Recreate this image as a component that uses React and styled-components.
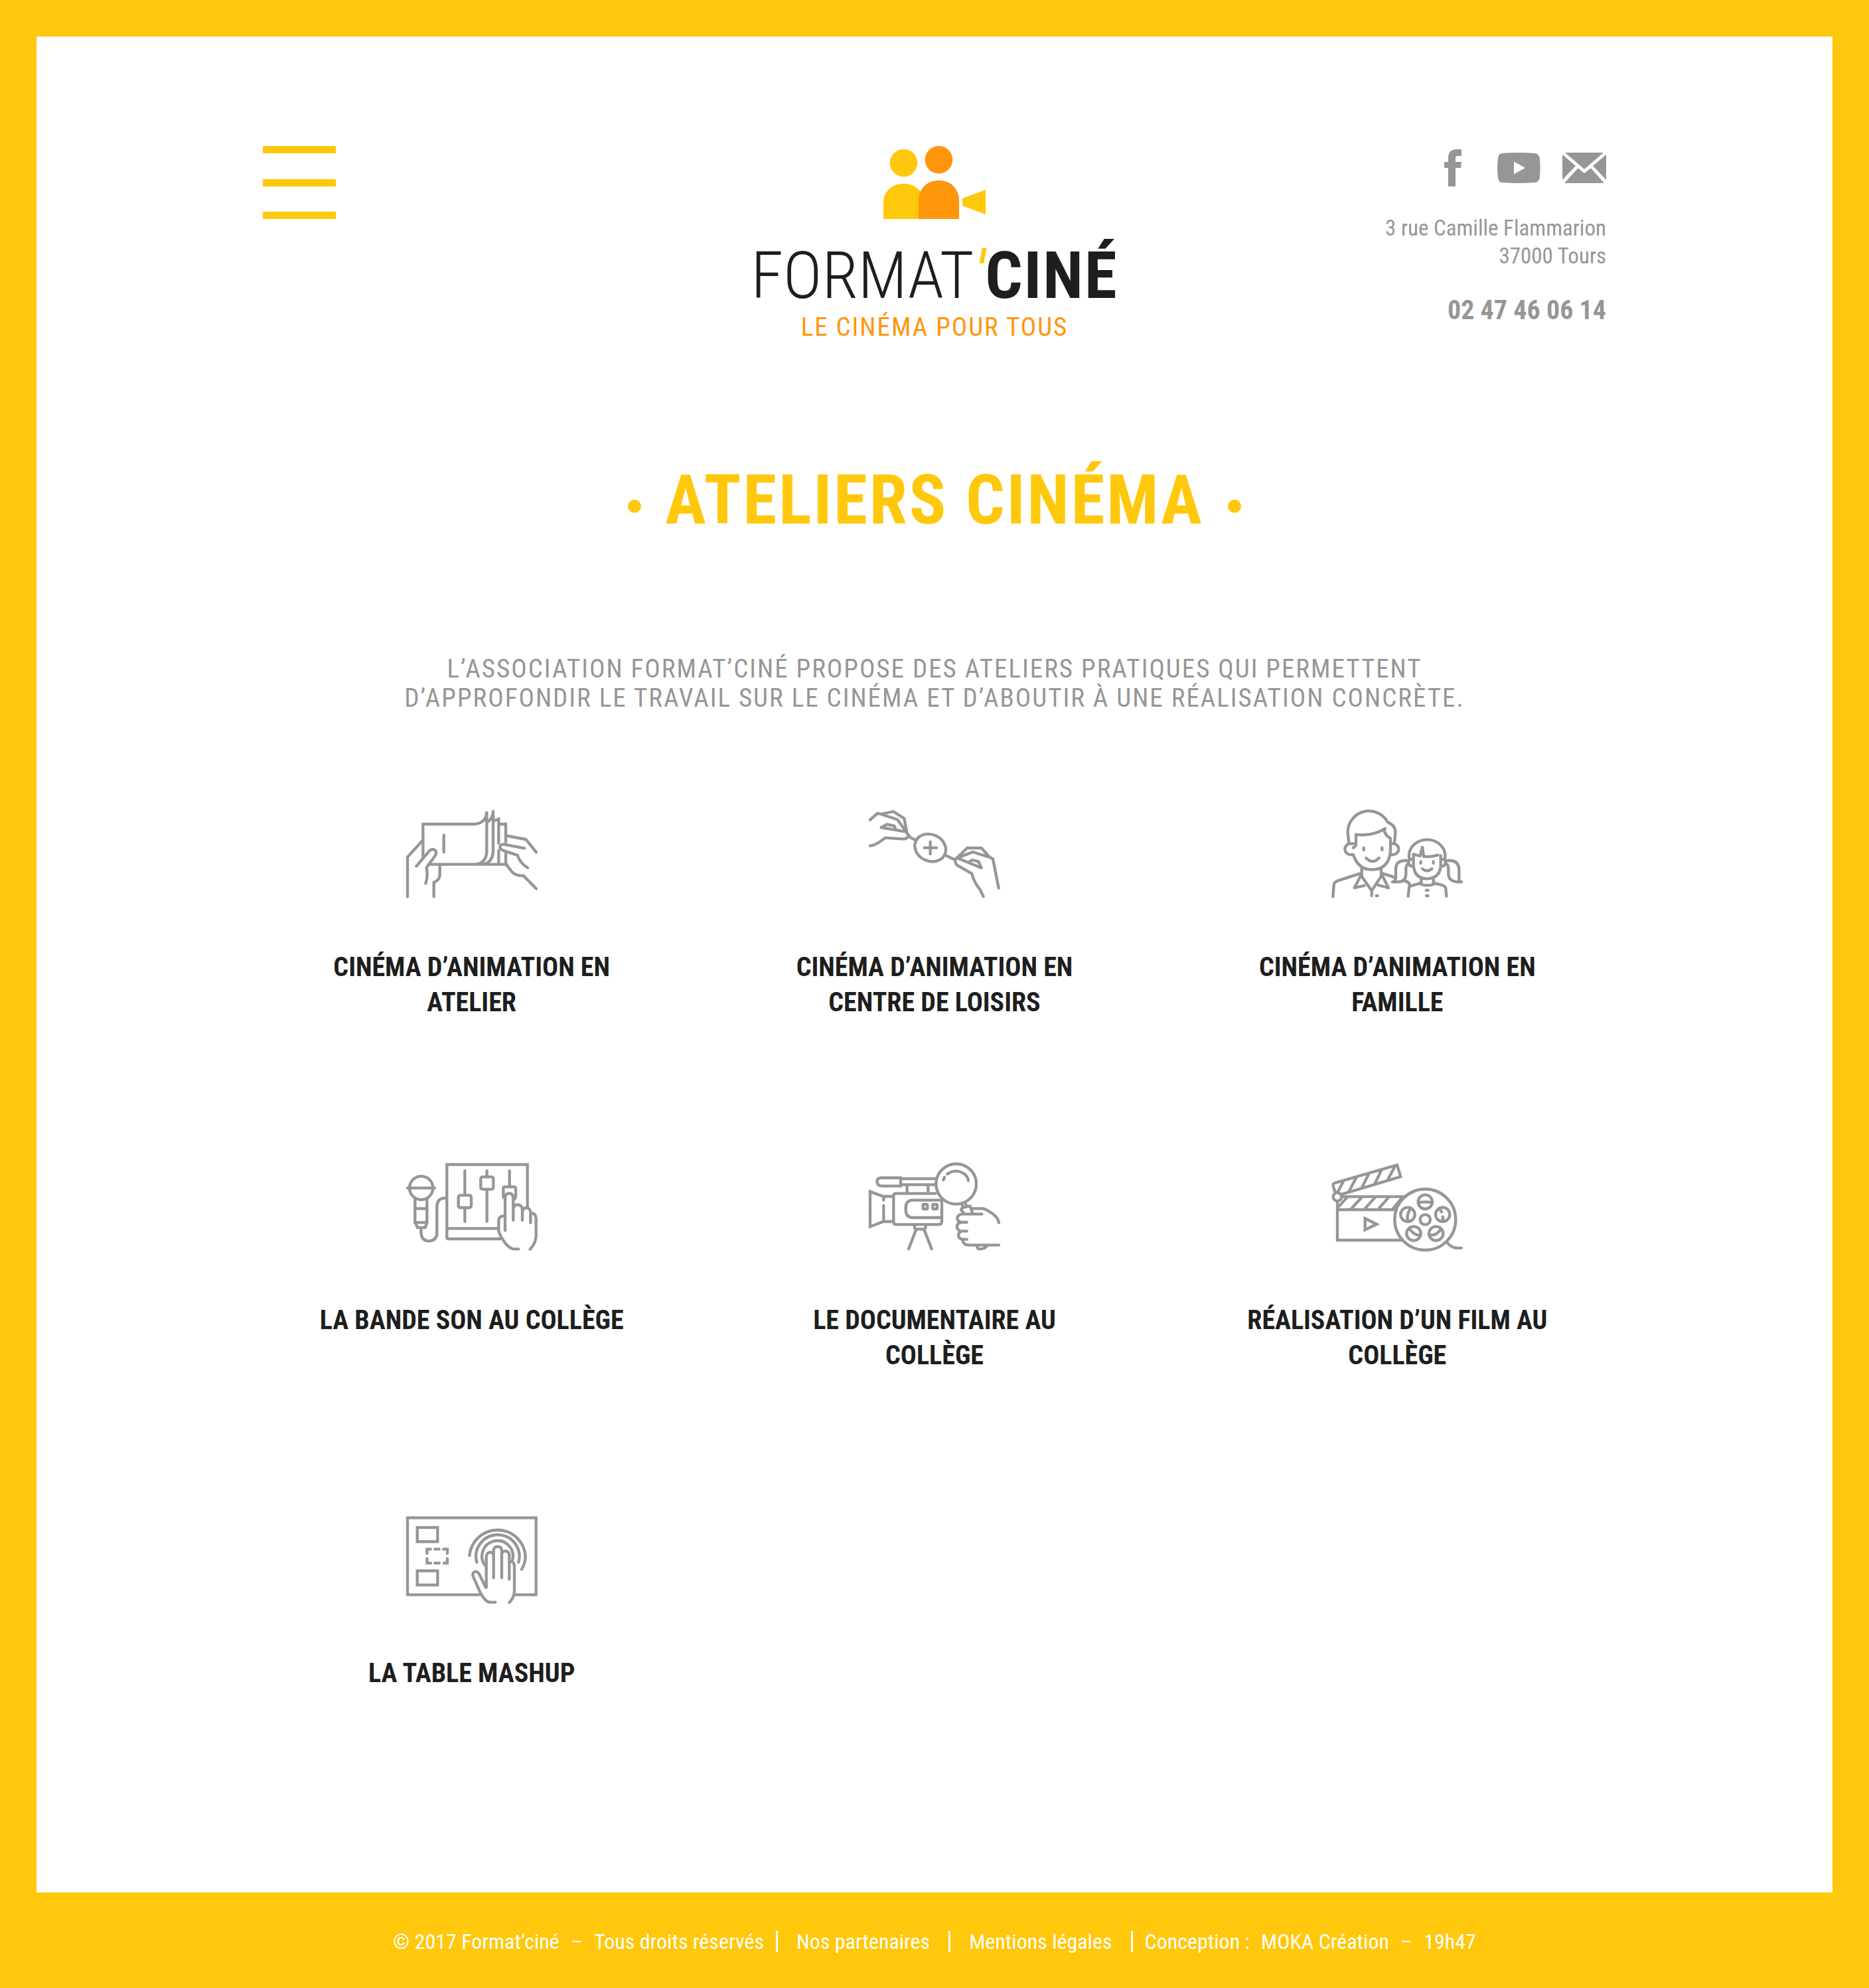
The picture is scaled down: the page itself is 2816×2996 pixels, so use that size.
import React from 'react';
import styled, { createGlobalStyle } from 'styled-components';

const yellow = '#ffc80c';
const orange = '#ff960c';
const grey = '#969696';
const ink = '#1e1e1e';

const GlobalStyle = createGlobalStyle`
  *, *::before, *::after { box-sizing: border-box; }
  body {
    margin: 0;
    background: ${yellow};
    color: ${grey};
    font-family: "Roboto Condensed", Roboto, "Liberation Sans", sans-serif;
  }
  h1, h2, p, ul { margin: 0; padding: 0; }
  a { color: inherit; text-decoration: none; }
`;

const Main = styled.main`
  margin: 55px 55px 0;
  padding: 165px 20px 251px;
  background: #fff;
`;

const Header = styled.header`
  display: grid;
  grid-template-columns: 1fr auto 1fr;
  align-items: start;
  width: min(2024px, 100%);
  margin: 0 auto 176px;
`;

const MenuButton = styled.button`
  display: flex;
  flex-direction: column;
  justify-content: space-between;
  width: 110px;
  height: 110px;
  padding: 0;
  border: 0;
  background: none;
  cursor: pointer;
`;

const MenuBar = styled.span`
  height: 11px;
  background: ${yellow};
`;

const Brand = styled.a`
  display: flex;
  flex-direction: column;
  align-items: center;
`;

const BrandMark = styled.svg`
  display: block;
  width: 154px;
  height: 110px;
  margin-bottom: 27px;
`;

const Wordmark = styled.span`
  display: flex;
  color: ${ink};
  font-size: 99px;
  font-weight: 300;
  line-height: 116px;
`;

const Apostrophe = styled.span`
  color: ${yellow};
  font-style: italic;
  font-weight: 400;
`;

const WordmarkStrong = styled.span`
  font-weight: 700;
  letter-spacing: 2px;
`;

const Tagline = styled.span`
  color: ${orange};
  font-size: 39px;
  line-height: 40px;
  letter-spacing: 2px;
`;

const Contact = styled.address`
  padding-top: 5px;
  font-style: normal;
  text-align: right;
`;

const SocialList = styled.ul`
  display: flex;
  justify-content: flex-end;
  gap: 33px;
  margin-bottom: 42px;
  list-style: none;
`;

const SocialLink = styled.a`
  display: block;
`;

const SocialIcon = styled.svg`
  display: block;
  width: 66px;
  height: 56px;
  fill: ${grey};
`;

const Street = styled.p`
  font-size: 33px;
  line-height: 42px;
`;

const Phone = styled.a`
  display: block;
  margin-top: 35px;
  font-size: 40px;
  font-weight: 700;
  line-height: 52px;
`;

const Title = styled.h1`
  display: flex;
  align-items: center;
  justify-content: center;
  gap: 36px;
  margin-bottom: 167px;
  color: ${yellow};
  font-size: 103px;
  font-weight: 700;
  line-height: 130px;
  letter-spacing: 3px;
  text-align: center;
  text-transform: uppercase;

  &::before,
  &::after {
    content: "";
    width: 20px;
    height: 20px;
    margin-top: 18px;
    border-radius: 50%;
    background: currentColor;
  }
`;

const Intro = styled.p`
  margin-bottom: 147px;
  font-size: 39px;
  line-height: 44px;
  letter-spacing: 2px;
  text-align: center;
  text-transform: uppercase;
`;

const Workshops = styled.ul`
  display: grid;
  grid-template-columns: repeat(3, 1fr);
  grid-auto-rows: 1fr;
  row-gap: 216px;
  width: min(2092px, 100%);
  margin: 0 auto;
  list-style: none;
`;

const Card = styled.a`
  display: flex;
  flex-direction: column;
  align-items: center;
  gap: 78px;
`;

const CardIcon = styled.svg`
  display: block;
  width: 200px;
  height: 132px;
  overflow: visible;
  fill: none;
  stroke: ${grey};
  stroke-width: 13;
  stroke-linecap: round;
`;

const CardTitle = styled.h2`
  max-width: 480px;
  color: ${ink};
  font-size: 40px;
  font-weight: 700;
  line-height: 53px;
  text-align: center;
  text-transform: uppercase;
`;

const Footer = styled.footer`
  display: flex;
  flex-wrap: wrap;
  justify-content: center;
  padding: 53px 55px 48px;
  color: #fff;
  font-size: 32px;
  line-height: 42px;
`;

const FooterGroup = styled.span`
  display: flex;
  gap: 17px;
  padding: 0 ${(p) => p.$end}px 0 ${(p) => p.$start}px;
`;

const Divider = styled.span`
  width: 3px;
  height: 32px;
  margin-top: 5px;
  background: #fff;
`;

const FlipbookIcon = () => (
  <CardIcon viewBox="62 63 600 396" aria-hidden="true">
    <path d="M71 454V275L141 198M111 316L168 249Q182 234 196 244Q205 256 195 270L157 322Q164 365 153 394" />
    <path d="M141 276V126H372Q428 122 429 68V248Q428 305 372 308M172 308H520M235 175V253" />
    <path d="M458 68Q457 98 434 116M458 68V250Q456 295 420 306M462 112L483 103V212M483 245V303M488 126H515V208M515 258V308" strokeLinejoin="miter" />
    <path d="M217 308V355Q217 378 190 390V454M521 179L606 195L653 253M600 235L505 217Q488 218 489 232Q492 242 510 247L568 267Q582 305 614 323M518 310L542 340Q558 360 595 359L653 418" />
  </CardIcon>
);

const ThaumatropeIcon = () => (
  <CardIcon viewBox="54 63 600 396" strokeLinejoin="round" aria-hidden="true">
    <path d="M63 107L96 77L112 81L168 69L217 100L230 168L240 180L226 190Q220 194 210 193L131 188Q90 222 63 224M112 81L186 105L226 160M228 161L113 141L139 127L172 134L178 148M236 182L270 199" />
    <ellipse cx="335" cy="233" rx="72" ry="60" transform="rotate(25 335 233)" />
    <path d="M308 233H363M335 206V261M402 266L448 288" />
    <path d="M575 453L560 422Q533 390 523 350L455 311Q443 296 450 284L502 234H566L604 276L618 283L644 415M455 280L527 252L604 276M455 278L566 324L553 295L525 288L512 296" />
  </CardIcon>
);

const FamilyIcon = () => (
  <CardIcon viewBox="46 63 600 396" strokeLinejoin="round" aria-hidden="true">
    <path d="M128 210L123 165A96 96 0 0 1 304 118Q340 132 338 165L334 210M148 233L160 222V173Q235 182 292 146M286 150Q292 178 316 190V250Q308 332 232 332Q170 332 148 264M148 214H135A25 25 0 0 0 135 264H148M318 214H328A25 25 0 0 1 328 264H318M195 233V243M278 233V243M206 279Q235 310 264 279" />
    <path d="M186 325V362L231 427L274 362V325M180 362L153 414L198 404M281 362L307 414L262 402M56 454L60 402Q62 388 75 383L186 347M274 347L336 367M375 381Q404 386 404 408M231 427V450M252 450H258" />
    <path d="M400 280V262A82 74 0 0 1 563 262V280M530 266Q500 276 466 272L460 230L450 270L420 262V312Q424 372 481 373Q538 370 543 318V268M416 285Q398 283 398 300Q398 316 418 317M546 285Q564 283 564 300Q564 316 546 317M453 295V303M510 295V303M460 328Q482 346 503 328" />
    <path d="M400 291H375Q340 295 340 330V370Q338 386 325 387H355Q386 384 386 350V325Q388 308 398 304M566 291H592Q626 295 626 335V387H637H615Q578 382 578 350V325Q576 308 566 304M455 375V398Q482 408 510 398V375M396 452L401 408L453 392M513 392L555 404Q566 408 566 420L569 452M478 425H486M478 450H486" />
  </CardIcon>
);

const MixerIcon = () => (
  <CardIcon viewBox="62 56 600 396" aria-hidden="true">
    <circle cx="133" cy="168" r="53" />
    <path d="M71 168H194M105 215V324H159V215M105 261H159M108 328L116 347H151L158 328M132 352V370Q134 407 168 408Q204 405 204 370V250Q206 214 240 214" />
    <path d="M613 254V62H249V392Q249 398 255 398H490M249 351H480M330 90V200M330 262V320M430 90V118M430 180V320M532 90V160" />
    <rect x="301" y="201" width="58" height="56" rx="8" />
    <rect x="402" y="118" width="57" height="56" rx="8" />
    <path d="M510 215Q504 212 504 206V170Q504 163 511 163H552Q560 163 560 170V205Q560 212 556 217M512 360V212Q514 192 531 192Q548 194 549 212V314M549 262Q552 243 570 243Q588 246 590 264V314M590 275Q594 257 610 257Q626 262 627 276V325M627 281Q650 280 652 305V385Q650 420 625 445M510 294Q484 294 483 315V362Q488 385 515 420Q535 444 555 444H573" />
  </CardIcon>
);

const CamcorderIcon = () => (
  <CardIcon viewBox="54 56 600 396" aria-hidden="true">
    <path d="M165 206H122L63 184V343L122 320H165M124 206V223M124 247V320M358 193H180Q169 193 169 204V322Q169 333 180 333H374Q387 333 387 320V228M384 223H255Q224 224 224 258V268Q226 302 255 302H384" />
    <rect x="302" y="242" width="20" height="21" rx="4" />
    <rect x="346" y="242" width="20" height="21" rx="4" />
    <path d="M201 122H112Q94 124 94 140Q96 158 115 159H201ZM201 126H358M201 153H356M230 156V190M325 156V190" />
    <circle cx="452" cy="150" r="91" />
    <path d="M394 132L399 120M412 105Q450 78 490 105Q504 117 507 134M264 340V348Q266 354 272 354H308Q314 352 314 340M270 358L237 444M308 358L341 444" />
    <path d="M478 242L484 256M494 238L500 252M484 279L475 268Q476 258 484 256L515 250L526 282M522 261H575Q640 290 645 325M568 286H478Q457 290 457 306Q460 322 478 323H500M478 323Q455 326 455 344Q458 362 478 363H500M478 363Q462 368 462 384Q466 399 482 400H500M481 403Q484 425 505 426H645M546 430Q548 446 560 444Q580 444 592 430" />
  </CardIcon>
);

const FilmIcon = () => (
  <CardIcon viewBox="46 56 600 396" aria-hidden="true">
    <path d="M66 188L56 155Q57 147 66 145L346 64L362 117L100 195M104 136L78 186M162 120L129 182M218 104L187 166M275 88L245 149M336 70L303 132" />
    <circle cx="76" cy="208" r="19" />
    <path d="M100 207H385M76 231V404H372M76 266H336M120 210L82 252M187 210L138 262M247 210L200 262M308 210L262 262M370 210L327 262M201 306V357L254 332Z" />
    <circle cx="473" cy="311" r="138" />
    <circle cx="473" cy="311" r="23" />
    <circle cx="473" cy="231" r="32" />
    <circle cx="394" cy="288" r="32" />
    <circle cx="552" cy="288" r="32" />
    <circle cx="421" cy="374" r="32" />
    <circle cx="522" cy="374" r="32" />
    <path d="M445 233Q473 229 501 233M406 262Q388 288 394 314M541 267L547 276M553 298V312M402 352Q420 380 446 382M544 352Q530 380 498 382M570 412Q592 445 636 439" />
  </CardIcon>
);

const TouchTableIcon = () => (
  <CardIcon viewBox="62 62 600 396" aria-hidden="true">
    <path d="M396 417H71V69H652V417H558M159 230V211H175M195 211H214M234 211H251V230M251 254V274H236M214 274H195M176 274H159V254" />
    <rect x="115" y="113" width="92" height="64" />
    <rect x="115" y="309" width="92" height="64" />
    <path d="M351 240A127 127 0 0 1 604 240Q604 275 587 302M384 270A98 98 0 1 1 573 270M422 285A70 70 0 1 1 546 258" />
    <path d="M460 340V215Q463 199 479 199Q495 200 497 216V340M497 228Q503 219 515 219Q530 222 531 238V347M460 235Q456 225 445 225Q430 225 427 243V388L393 320Q380 305 368 318Q364 324 368 335L400 408Q425 452 445 451H468M533 265Q552 266 554 285V405Q550 435 531 452" />
  </CardIcon>
);

const workshops = [
  { title: 'Cinéma d’animation en atelier', Icon: FlipbookIcon },
  { title: 'Cinéma d’animation en centre de loisirs', Icon: ThaumatropeIcon },
  { title: 'Cinéma d’animation en famille', Icon: FamilyIcon },
  { title: 'La bande son au collège', Icon: MixerIcon },
  { title: 'Le documentaire au collège', Icon: CamcorderIcon },
  { title: 'Réalisation d’un film au collège', Icon: FilmIcon },
  { title: 'La table mashup', Icon: TouchTableIcon },
];

export default function App() {
  return (
    <>
      <GlobalStyle />
      <Main>
        <Header>
          <MenuButton type="button" aria-label="Menu">
            <MenuBar />
            <MenuBar />
            <MenuBar />
          </MenuButton>
          <Brand href="#accueil">
            <BrandMark viewBox="0 0 154 110" aria-hidden="true">
              <g fill={yellow}>
                <circle cx="30.5" cy="25.5" r="20.8" />
                <path d="M0 110V84A29 27.5 0 0 1 27 57H34A29 27.5 0 0 1 61 84V110Z" />
                <path d="M119 79L154 66V103L119 90Z" />
              </g>
              <g fill={orange}>
                <circle cx="83.5" cy="20.8" r="20.8" />
                <path d="M53 110V81A29 29 0 0 1 80 52H87A29 29 0 0 1 114 81V110Z" />
              </g>
            </BrandMark>
            <Wordmark>
              <span>FORMAT</span>
              <Apostrophe>'</Apostrophe>
              <WordmarkStrong>CINÉ</WordmarkStrong>
            </Wordmark>
            <Tagline>LE CINÉMA POUR TOUS</Tagline>
          </Brand>
          <Contact>
            <SocialList>
              <li>
                <SocialLink href="#facebook" aria-label="Facebook">
                  <SocialIcon viewBox="0 0 66 56" aria-hidden="true">
                    <path d="M26 56V28H20V19H26V13Q26 0 39 0H46V10H40Q37 10 37 13V19H46L45 28H37V56Z" />
                  </SocialIcon>
                </SocialLink>
              </li>
              <li>
                <SocialLink href="#youtube" aria-label="YouTube">
                  <SocialIcon viewBox="0 0 66 56" aria-hidden="true">
                    <path fillRule="evenodd" d="M8 6Q33 4 58 6Q64 7 65 14Q66 28 65 42Q64 49 58 50Q33 52 8 50Q2 49 2 42Q0 28 2 14Q2 7 8 6ZM26 18.5V37.5L43 28Z" />
                  </SocialIcon>
                </SocialLink>
              </li>
              <li>
                <SocialLink href="#contact" aria-label="E-mail">
                  <SocialIcon viewBox="0 0 66 56" aria-hidden="true">
                    <path d="M4 5H62L33 30ZM0 8L20 25L0 46ZM66 8L46 25L66 46ZM3 51L23.5 28.5L33 36L43 28.5L63 51Z" />
                  </SocialIcon>
                </SocialLink>
              </li>
            </SocialList>
            <Street>3 rue Camille Flammarion</Street>
            <Street>37000 Tours</Street>
            <Phone href="tel:+33247460614">02 47 46 06 14</Phone>
          </Contact>
        </Header>

        <Title>Ateliers cinéma</Title>
        <Intro>
          L’association Format’ciné propose des ateliers pratiques qui permettent
          <br />
          d’approfondir le travail sur le cinéma et d’aboutir à une réalisation concrète.
        </Intro>

        <Workshops>
          {workshops.map(({ title, Icon }) => (
            <li key={title}>
              <Card href="#atelier">
                <Icon />
                <CardTitle>{title}</CardTitle>
              </Card>
            </li>
          ))}
        </Workshops>
      </Main>
      <Footer>
        <FooterGroup $start={0} $end={18}>
          <span>© 2017 Format’ciné</span>
          <span>–</span>
          <span>Tous droits réservés</span>
        </FooterGroup>
        <Divider />
        <FooterGroup $start={28} $end={28}>
          <a href="#partenaires">Nos partenaires</a>
        </FooterGroup>
        <Divider />
        <FooterGroup $start={28} $end={28}>
          <a href="#mentions">Mentions légales</a>
        </FooterGroup>
        <Divider />
        <FooterGroup $start={18} $end={0}>
          <span>Conception :</span>
          <a href="#moka">MOKA Création</a>
          <span>–</span>
          <a href="#19h47">19h47</a>
        </FooterGroup>
      </Footer>
    </>
  );
}
